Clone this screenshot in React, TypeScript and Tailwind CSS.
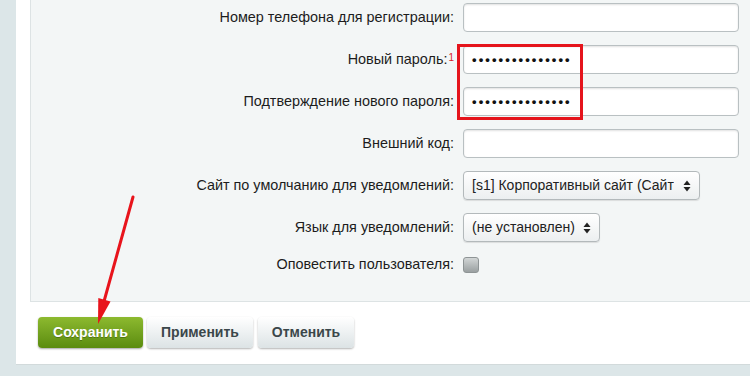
import React from "react";

const font = { fontFamily: '"Liberation Sans", Arial, Helvetica, sans-serif' };

function TextInput({ value }: { value?: string }) {
  return (
    <div className="h-[29px] w-[276px] rounded-[4px] border border-[#b9c0c2] bg-white shadow-[inset_0_1px_2px_rgba(0,0,0,0.12)] flex items-center pl-[8px]">
      {value ? (
        <span className="text-[13px] font-bold text-[#111] tracking-[2.1px] leading-none">{value}</span>
      ) : null}
    </div>
  );
}

function Select({ text, width }: { text: string; width: string }) {
  return (
    <div
      className={`${width} h-[29px] rounded-[4px] border border-[#b3b9bb] bg-gradient-to-b from-[#ffffff] to-[#eceff0] shadow-[0_1px_1px_rgba(0,0,0,0.1)] flex items-center justify-between pl-[8px] pr-[8px]`}
    >
      <span className="text-[14px] text-[#222] whitespace-nowrap overflow-hidden">{text}</span>
      <span className="flex flex-col items-center leading-none text-[#222]">
        <svg width="8" height="12" viewBox="0 0 8 12">
          <path d="M4 0.5 L7.5 5 L0.5 5 Z" fill="#222" />
          <path d="M4 11.5 L7.5 7 L0.5 7 Z" fill="#222" />
        </svg>
      </span>
    </div>
  );
}

function Row({ label, children, sup }: { label: string; children: React.ReactNode; sup?: boolean }) {
  return (
    <div className="flex items-center h-[29px]">
      <div className="w-[425px] text-right text-[14.4px] text-[#1c1c1c] pr-[2px] whitespace-nowrap">
        {label}
        {sup ? <sup className="text-[10px] text-[#d9222a] relative -top-[3px] ml-[1px]">1</sup> : null}
      </div>
      <div className="ml-[7px]">{children}</div>
    </div>
  );
}

export default function App() {
  const dots = "•••••••••••••••";
  return (
    <div className="relative w-[750px] h-[376px] overflow-hidden bg-[#dce6e8]" style={font}>
      <div className="ml-[16px] w-[740px] h-[365px] bg-white flex flex-col pl-[14px] border-b border-[#d2dadb]">
        <div className="h-[302px] bg-[#f3f6f6] border-l border-b border-[#dde3e4] pt-[3px] flex flex-col gap-[13px]">
          <Row label="Номер телефона для регистрации:">
            <TextInput />
          </Row>
          <Row label="Новый пароль:" sup>
            <TextInput value={dots} />
          </Row>
          <Row label="Подтверждение нового пароля:">
            <TextInput value={dots} />
          </Row>
          <Row label="Внешний код:">
            <TextInput />
          </Row>
          <Row label="Сайт по умолчанию для уведомлений:">
            <Select text="[s1] Корпоративный сайт (Сайт" width="w-[237px]" />
          </Row>
          <Row label="Язык для уведомлений:">
            <Select text="(не установлен)" width="w-[137px]" />
          </Row>
          <div className="flex items-center h-[16px] mt-[2px]">
            <div className="w-[425px] text-right text-[14.4px] text-[#1c1c1c] pr-[2px] whitespace-nowrap">
              Оповестить пользователя:
            </div>
            <div className="ml-[7px] w-[16px] h-[16px] rounded-[3px] border border-[#8e9495] bg-gradient-to-b from-[#d2d6d6] to-[#9aa0a1]" />
          </div>
        </div>
        <div className="flex gap-[4px] pt-[15px] pl-[8px]">
          <button className="h-[31px] w-[105px] rounded-[4px] bg-gradient-to-b from-[#8dba2f] to-[#5b8c0e] text-white text-[14px] font-bold shadow-[0_1px_2px_rgba(0,0,0,0.35)] [text-shadow:0_1px_0_rgba(0,0,0,0.25)]">
            Сохранить
          </button>
          <button className="h-[31px] w-[106px] rounded-[4px] bg-gradient-to-b from-[#ffffff] to-[#dce3e5] text-[#3b474a] text-[14px] font-bold shadow-[0_1px_2px_rgba(0,0,0,0.3)]">
            Применить
          </button>
          <button className="ml-[1px] h-[31px] w-[96px] rounded-[4px] bg-gradient-to-b from-[#ffffff] to-[#dce3e5] text-[#3b474a] text-[14px] font-bold shadow-[0_1px_2px_rgba(0,0,0,0.3)]">
            Отменить
          </button>
        </div>
      </div>

      <div className="absolute left-[457px] top-[44px] w-[126px] h-[76px] border-[3px] border-[#e5141c]" />

      <svg className="absolute left-0 top-0 pointer-events-none" width="750" height="376" viewBox="0 0 750 376">
        <line x1="133" y1="197" x2="103" y2="305" stroke="#e8141c" strokeWidth="3" strokeLinecap="round" />
        <polygon points="98,324 110.5,301.5 98.3,298" fill="#e8141c" />
      </svg>
    </div>
  );
}
